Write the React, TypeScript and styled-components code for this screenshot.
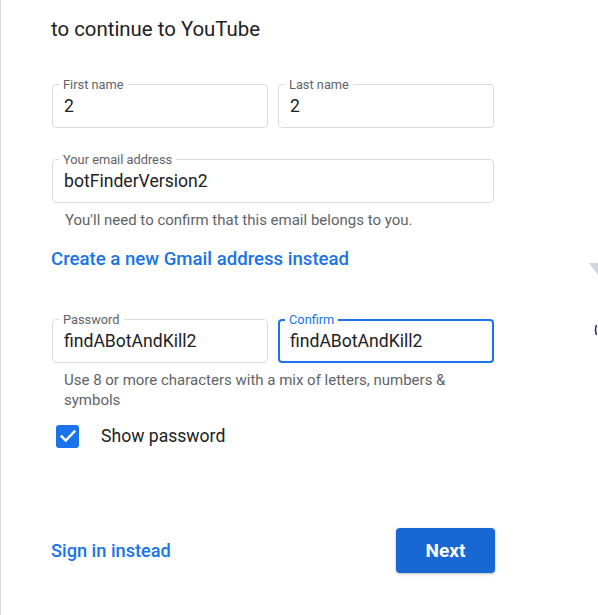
import React from "react";
import styled, { createGlobalStyle } from "styled-components";

const GlobalStyle = createGlobalStyle`
  html, body {
    margin: 0;
    padding: 0;
    background: #fff;
  }
  body {
    font-family: Roboto, "Liberation Sans", Arial, sans-serif;
    color: #202124;
  }
`;

const Field = (props: { label: string; value: string; focused?: boolean }) => {
    const { label, value, focused } = props;
    return (
        <FieldBox $focused={!!focused}>
            <FieldLabel $focused={!!focused}>{label}</FieldLabel>
            <FieldValue>{value}</FieldValue>
        </FieldBox>
    );
};

const CheckIcon = () => (
    <svg width="18" height="18" viewBox="0 0 24 24" fill="none">
        <path d="M3.5 12.5l5.5 5.5L20.5 6" stroke="#fff" strokeWidth="3.2" strokeLinecap="square" />
    </svg>
);

const App = () => {
    return (
        <Page>
            <GlobalStyle />
            <Title>to continue to YouTube</Title>
            <Row>
                <Field label="First name" value="2" />
                <Field label="Last name" value="2" />
            </Row>
            <EmailBlock>
                <Field label="Your email address" value="botFinderVersion2" />
                <Helper>You'll need to confirm that this email belongs to you.</Helper>
            </EmailBlock>
            <GmailLink>Create a new Gmail address instead</GmailLink>
            <PasswordRow>
                <Field label="Password" value="findABotAndKill2" />
                <Field label="Confirm" value="findABotAndKill2" focused />
            </PasswordRow>
            <Helper>Use 8 or more characters with a mix of letters, numbers &amp; symbols</Helper>
            <CheckRow>
                <CheckBox><CheckIcon /></CheckBox>
                <CheckLabel>Show password</CheckLabel>
            </CheckRow>
            <Footer>
                <FooterLink>Sign in instead</FooterLink>
                <NextButton>Next</NextButton>
            </Footer>
            <Decor width="10" height="80" viewBox="0 0 10 80">
                <path d="M1 0 L10 0 L10 12 Z" fill="#d2d5da" />
                <path d="M8.5 62 Q6.5 67 8.5 72" stroke="#3c2a78" strokeWidth="1.6" fill="none" />
            </Decor>
        </Page>
    );
};

const Page = styled.div`
    position: relative;
    box-sizing: border-box;
    min-height: 615px;
    width: 598px;
    overflow: hidden;
    border-left: 1px solid #dadce0;
    padding: 17px 0 0 50px;
`;

const Title = styled.div`
    font-size: 20.4px;
    line-height: 24px;
    color: #202124;
`;

const Row = styled.div`
    display: grid;
    grid-template-columns: 216px 216px;
    gap: 10px;
    width: 442px;
    margin: 43px 0 0 1px;
`;

const PasswordRow = styled(Row)`
    margin-top: 48px;
`;

const EmailBlock = styled.div`
    width: 442px;
    margin: 31px 0 0 1px;
`;

const FieldBox = styled.div<{ $focused: boolean }>`
    position: relative;
    box-sizing: border-box;
    height: 44px;
    display: flex;
    align-items: center;
    border: ${({ $focused }) => ($focused ? "2px solid #1a73e8" : "1px solid #dadce0")};
    border-radius: 4px;
    padding: 0 ${({ $focused }) => ($focused ? "10px" : "11px")};
`;

const FieldLabel = styled.span<{ $focused: boolean }>`
    position: absolute;
    top: ${({ $focused }) => ($focused ? "-8px" : "-7px")};
    left: ${({ $focused }) => ($focused ? "5px" : "6px")};
    padding: 0 4px;
    background: #fff;
    font-size: 12.8px;
    line-height: 14px;
    color: ${({ $focused }) => ($focused ? "#1a73e8" : "#5f6368")};
`;

const FieldValue = styled.span`
    font-size: 17.6px;
    line-height: 20px;
    color: #202124;
`;

const Helper = styled.div`
    box-sizing: border-box;
    width: 443px;
    padding: 0 0 0 13px;
    margin-top: 7px;
    font-size: 15px;
    line-height: 20px;
    color: #5f6368;
`;

const GmailLink = styled.div`
    margin-top: 17px;
    font-size: 18.6px;
    line-height: 24px;
    font-weight: 500;
    color: #1a73e8;
`;

const CheckRow = styled.div`
    display: flex;
    align-items: center;
    gap: 22px;
    margin: 14px 0 0 5px;
`;

const CheckBox = styled.div`
    width: 23px;
    height: 23px;
    border-radius: 3px;
    background: #1a73e8;
    display: flex;
    align-items: center;
    justify-content: center;
`;

const CheckLabel = styled.span`
    font-size: 17.6px;
    line-height: 24px;
    color: #202124;
`;

const Footer = styled.div`
    display: flex;
    align-items: center;
    justify-content: space-between;
    width: 444px;
    margin-top: 80px;
`;

const FooterLink = styled.span`
    font-size: 18.2px;
    font-weight: 500;
    color: #1a73e8;
`;

const NextButton = styled.button`
    width: 99px;
    height: 45px;
    border: none;
    border-radius: 4px;
    background: #1967d2;
    color: #fff;
    font-family: Roboto, "Liberation Sans", Arial, sans-serif;
    font-size: 19px;
    font-weight: 700;
    box-shadow: 0 1px 3px rgba(60, 64, 67, 0.35);
`;

const Decor = styled.svg`
    position: absolute;
    right: 0;
    top: 263px;
`;

export default App;
